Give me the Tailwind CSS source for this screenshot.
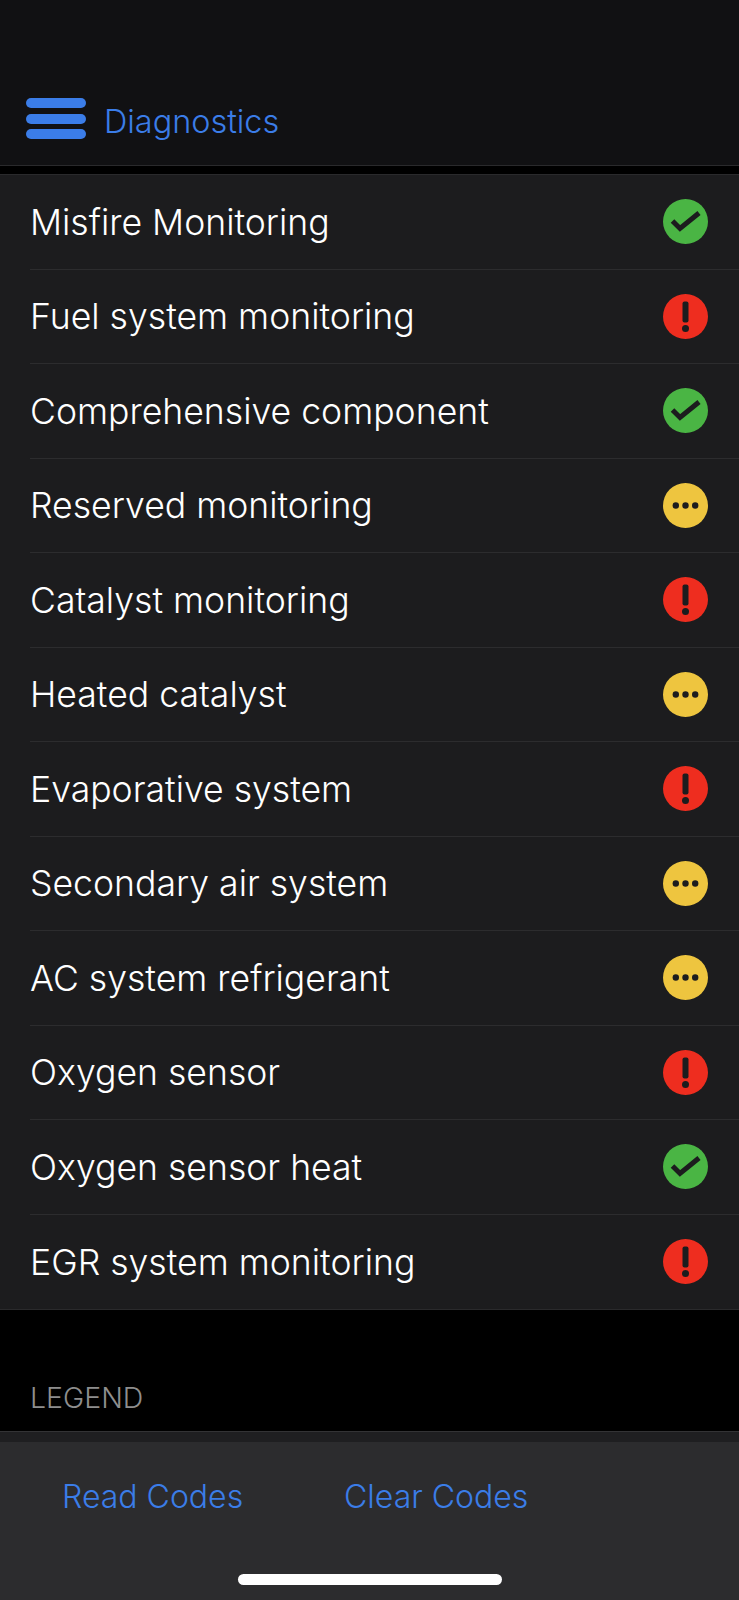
<!DOCTYPE html>
<html lang="en">
    <head>
        <meta charset="UTF-8">
        <meta name="viewport" content="width=device-width, initial-scale=1.0">
        <title>Diagnostics</title>
        <script src="https://cdn.jsdelivr.net/npm/@tailwindcss/browser@4"></script>
    </head>
    <body class="bg-black font-['Inter','Liberation_Sans',sans-serif]">
        <div class="w-[739px] h-[1600px] flex flex-col overflow-hidden bg-black">
            <header class="h-[166px] shrink-0 bg-[#111113] border-b border-[#2a2a2c] flex items-end pl-[26px] pb-[26px]">
                <div class="w-[60px] h-[41px] flex flex-col justify-between">
                    <div class="h-[10px] rounded-full bg-[#3b7de8]"></div>
                    <div class="h-[10px] rounded-full bg-[#3b7de8]"></div>
                    <div class="h-[10px] rounded-full bg-[#3b7de8]"></div>
                </div>
                <h1 class="ml-[18px] text-[32.4px] font-light leading-[41px] translate-y-[3px] text-[#3b7de8]">Diagnostics</h1>
            </header>

            <ul id="monitors" class="mt-[8px] bg-[#1c1c1e] border-y border-[#2a2a2c]"></ul>

            <div class="h-[121px] shrink-0 flex items-end pl-[30px] pb-[17px] text-[28.5px] font-light leading-[32px] text-[#8e8e8e]">LEGEND</div>

            <div class="h-[11px] shrink-0 bg-[#1f1f21] border-t border-[#333335]"></div>
            <footer class="flex-1 bg-[#2c2c2e] relative">
                <div class="flex pl-[62px] pt-[35px] text-[32px] font-light leading-[40px] text-[#3b7de8]">
                    <button class="w-[282px] text-left">Read Codes</button>
                    <button>Clear Codes</button>
                </div>
                <div class="absolute left-[238px] top-[132px] w-[264px] h-[11px] rounded-full bg-white"></div>
            </footer>
        </div>

        <script>
        const icons = {
            ok: `<svg viewBox="0 0 45 45" class="w-[45px] h-[45px]"><circle cx="22.5" cy="22.5" r="22.5" fill="#4ab544"/><path d="M9.5 22 L17 29.5 L36 14" fill="none" stroke="#1c1c1e" stroke-width="5"/></svg>`,
            fail: `<svg viewBox="0 0 45 45" class="w-[45px] h-[45px]"><circle cx="22.5" cy="22.5" r="22.5" fill="#ee2d1f"/><rect x="19.5" y="7.5" width="6" height="21" rx="2" fill="#1c1c1e"/><circle cx="22.5" cy="34.5" r="3.5" fill="#1c1c1e"/></svg>`,
            wait: `<svg viewBox="0 0 45 45" class="w-[45px] h-[45px]"><circle cx="22.5" cy="22.5" r="22.5" fill="#eec53f"/><circle cx="12.8" cy="22.5" r="3.2" fill="#1c1c1e"/><circle cx="22.5" cy="22.5" r="3.2" fill="#1c1c1e"/><circle cx="32.2" cy="22.5" r="3.2" fill="#1c1c1e"/></svg>`
        };

        const monitors = [
            ["Misfire Monitoring", "ok"],
            ["Fuel system monitoring", "fail"],
            ["Comprehensive component", "ok"],
            ["Reserved monitoring", "wait"],
            ["Catalyst monitoring", "fail"],
            ["Heated catalyst", "wait"],
            ["Evaporative system", "fail"],
            ["Secondary air system", "wait"],
            ["AC system refrigerant", "wait"],
            ["Oxygen sensor", "fail"],
            ["Oxygen sensor heat", "ok"],
            ["EGR system monitoring", "fail"]
        ];

        document.getElementById("monitors").innerHTML = monitors.map(([name, status], index) => `
            <li class="h-[94.5px] pl-[30px]">
                <div class="h-full flex items-center justify-between pr-[31px] ${index < monitors.length - 1 ? "border-b border-[#2c2c2e]" : ""}">
                    <span class="mt-[2px] text-[35.6px] font-light leading-[44px] text-white">${name}</span>
                    ${icons[status]}
                </div>
            </li>
        `).join("");
        </script>
    </body>
</html>
